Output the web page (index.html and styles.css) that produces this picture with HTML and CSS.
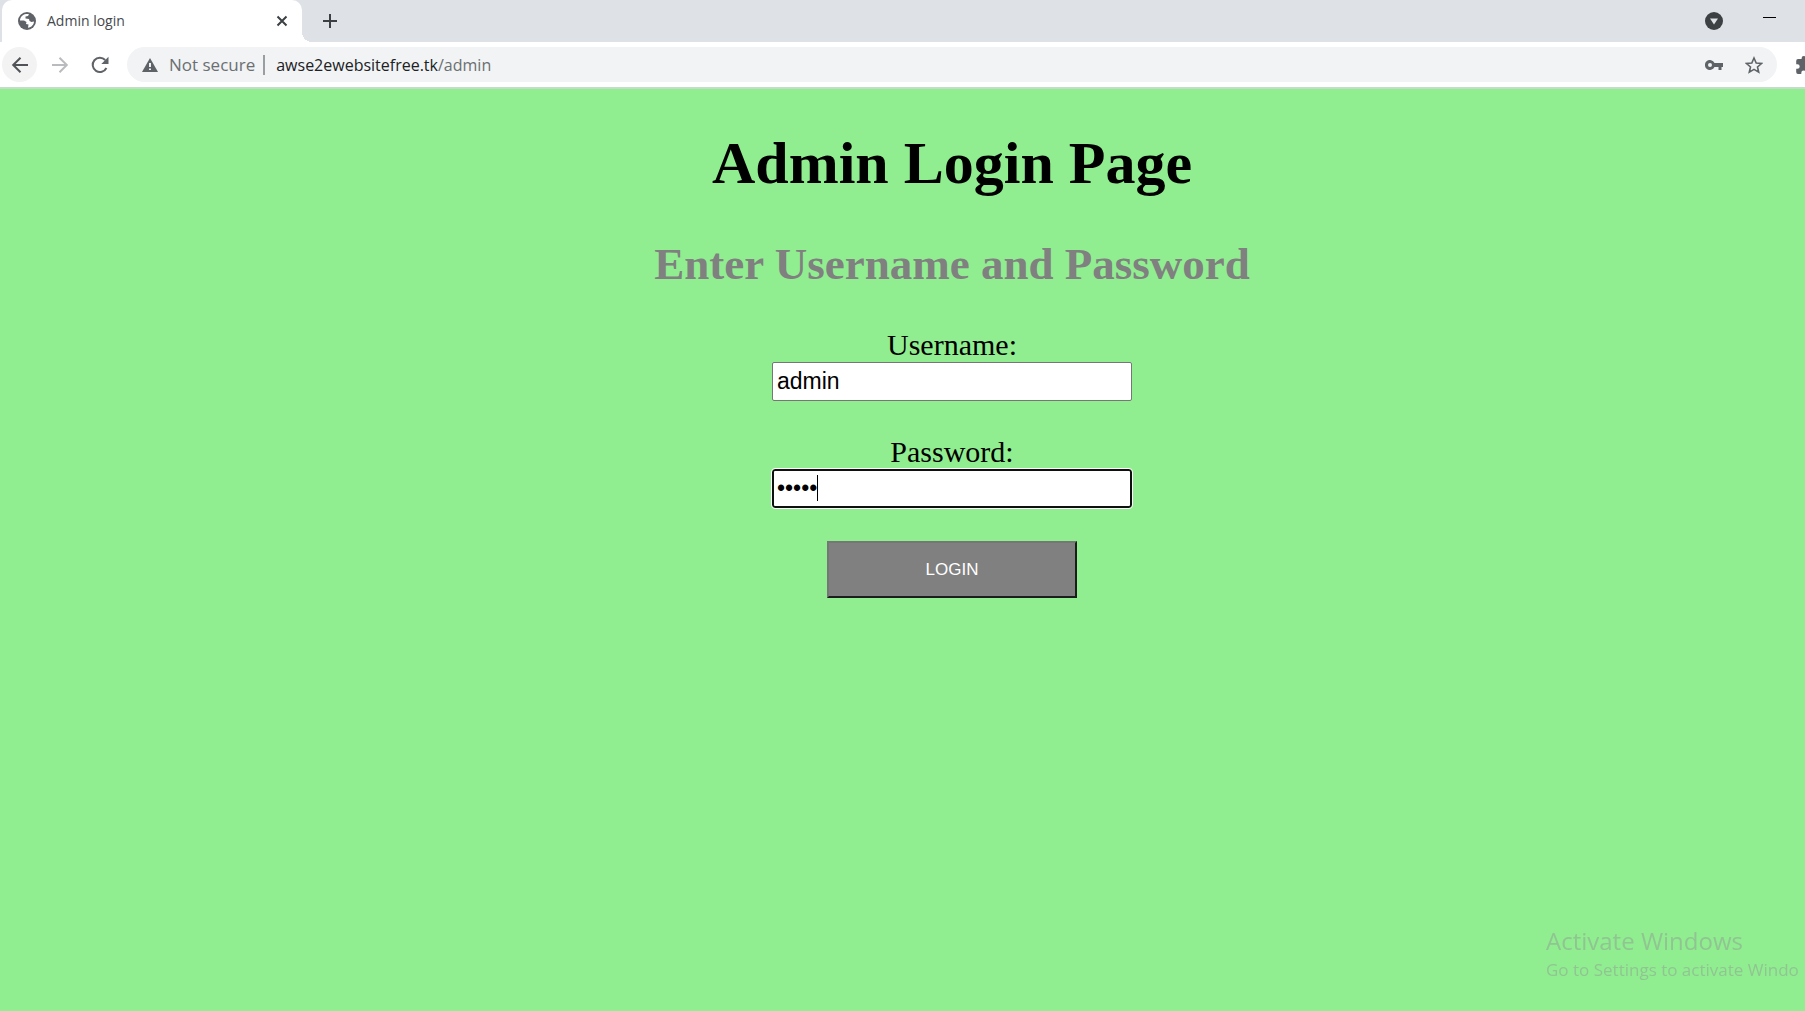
FILE: index.html
```html
<!DOCTYPE html>
<html lang="en">
<head>
<meta charset="utf-8">
<title>Admin login</title>
<link rel="stylesheet" href="styles.css">
</head>
<body>
<header class="browser">
  <div class="tabs">
    <div class="tab">
      <svg class="tab-icon" viewBox="0 0 18 18" aria-hidden="true"><circle cx="9" cy="9" r="9" fill="#5f6368"/><path d="M8 2C4.500 2.500 2 5.500 2 8.500L6 8.500 8.500 10 8 12 10.500 12.500 10 15.800C13.500 15.300 16 12.500 16 9.500L13.500 10 11.500 9 11 7 7.500 6.500 7.500 4.500 10 4 11 2.300C10 2 9 1.900 8 2Z" fill="#fff"/><path d="M3 9.500L5 10 6 12 8 13.500 8 16C5 15.500 3 13 3 9.500Z" fill="#5f6368"/></svg>
      <span class="tab-title">Admin login</span>
      <button class="icon-button close" aria-label="Close tab"><svg width="12" height="12" viewBox="0 0 12 12"><path d="M1.500 1.500l9 9M10.500 1.500l-9 9" stroke="#3c4043" stroke-width="2"/></svg></button>
    </div>
    <button class="icon-button new-tab" aria-label="New tab"><svg width="16" height="16" viewBox="0 0 16 16"><path d="M8 1v14M1 8h14" stroke="#3c4043" stroke-width="2"/></svg></button>
    <div class="window-controls">
      <button class="icon-button" aria-label="Search tabs"><svg width="18" height="18" viewBox="0 0 18 18"><circle cx="9" cy="9" r="9" fill="#3c4043"/><path d="M5 6.500h8L9 12.500z" fill="#dee1e6"/></svg></button>
      <button class="icon-button minimize" aria-label="Minimize"><svg width="13" height="8" viewBox="0 0 13 8"><path d="M0 .5h13" stroke="#000"/></svg></button>
    </div>
  </div>
  <div class="toolbar">
    <button class="icon-button nav back" aria-label="Back"><svg width="18" height="18" viewBox="0 0 18 18"><path d="M17 9H2.500M9.500 1.700L2.200 9l7.300 7.300" fill="none" stroke="#505357" stroke-width="2"/></svg></button>
    <button class="icon-button nav" aria-label="Forward"><svg width="18" height="18" viewBox="0 0 18 18"><path d="M1 9h14.500M8.500 1.700L15.800 9l-7.300 7.300" fill="none" stroke="#b9bbbe" stroke-width="2"/></svg></button>
    <button class="icon-button nav" aria-label="Reload"><svg width="18" height="18" viewBox="0 0 18 18"><path d="M15.400 12A7.200 7.200 0 1 1 14.200 4" fill="none" stroke="#5f6368" stroke-width="2"/><path d="M17.500 .8v7.200h-7.200z" fill="#5f6368"/></svg></button>
    <div class="omnibox">
      <svg width="16" height="14" viewBox="0 0 16 14" aria-hidden="true"><path d="M8 0l8 14H0z" fill="#5f6368"/><path d="M8 5v4M8 10.500v1.500" stroke="#f1f3f4" stroke-width="2"/></svg>
      <span class="security">Not secure</span>
      <span class="divider"></span>
      <span class="url">awse2ewebsitefree.tk<span class="path">/admin</span></span>
      <button class="icon-button" aria-label="Saved passwords"><svg width="18" height="10" viewBox="0 0 18 10"><path d="M9.500 3A5 5 0 1 0 9.500 7H13.500V10H16.500V7H18V3ZM5 7a2 2 0 1 1 0-4 2 2 0 0 1 0 4Z" fill="#5f6368" fill-rule="evenodd"/></svg></button>
      <button class="icon-button" aria-label="Bookmark this page"><svg width="18" height="18" viewBox="0 0 18 18"><path d="M9 2l2.200 5 5.300.5-4 3.500 1.200 5.200L9 13.400l-4.700 2.800L5.500 11l-4-3.500 5.300-.5z" fill="none" stroke="#5f6368" stroke-width="1.600"/></svg></button>
    </div>
    <button class="icon-button extensions" aria-label="Extensions"><svg width="18" height="18" viewBox="0 0 18 18"><path d="M16 8.500h-1V5a2 2 0 0 0-2-2h-3V2.300a2.200 2.200 0 0 0-4.400 0V3H2A2 2 0 0 0 .2 5v3.200h1.200a2.300 2.300 0 0 1 0 4.600H.2V16A2 2 0 0 0 2 18h3.300v-1.200a2.300 2.300 0 0 1 4.600 0V18H13a2 2 0 0 0 2-2v-3.200h1a2.200 2.200 0 0 0 0-4.300z" fill="#5f6368"/></svg></button>
  </div>
</header>
<main class="page">
  <h1 class="title">Admin Login Page</h1>
  <h2 class="subtitle">Enter Username and Password</h2>
  <form class="login">
    <div class="field">
      <label for="username">Username:</label>
      <input class="entry" id="username" type="text" value="admin">
    </div>
    <div class="field">
      <label for="password">Password:</label>
      <div class="entry-wrap">
        <input class="entry focused" id="password" type="password" value="admin">
        <span class="caret"></span>
      </div>
    </div>
    <button class="submit" type="button">LOGIN</button>
  </form>
</main>
<aside class="watermark">
  <p class="watermark-title">Activate Windows</p>
  <p class="watermark-text">Go to Settings to activate Windo</p>
</aside>
</body>
</html>
```
FILE: styles.css
```css
* { box-sizing: border-box; }
body {
  margin: 0;
  min-height: 100vh;
  overflow: hidden;
  background: #90ee90;
  color: #000;
  font-family: "Liberation Serif", serif;
}
.browser {
  background: #fff;
  border-bottom: 2px solid #c5dcc8;
  font-family: "Open Sans", sans-serif;
}
.icon-button {
  display: flex;
  align-items: center;
  justify-content: center;
  flex: none;
  padding: 0;
  border: 0;
  background: none;
}
.tabs {
  display: flex;
  align-items: center;
  height: 42px;
  padding-left: 2px;
  background: #dee1e6;
}
.tab {
  position: relative;
  display: flex;
  align-items: center;
  align-self: stretch;
  gap: 11px;
  width: 300px;
  padding: 0 14px 0 16px;
  border-radius: 10px 10px 0 0;
  background: #fff;
}
.tab::after {
  content: "";
  position: absolute;
  left: 100%;
  bottom: 0;
  width: 10px;
  height: 10px;
  background: radial-gradient(circle at 100% 0, #dee1e6 10px, #fff 10px);
}
.tab-icon { width: 18px; height: 18px; }
.tab-title { flex: 1; font-size: 14px; line-height: 18px; color: #45494d; }
.new-tab { margin-left: 20px; }
.window-controls {
  display: flex;
  align-items: center;
  gap: 40px;
  margin-left: auto;
  padding-right: 29px;
}
.toolbar {
  display: flex;
  align-items: center;
  height: 45px;
  padding-left: 2px;
}
.nav { width: 35px; height: 35px; margin-right: 5px; border-radius: 50%; }
.back { background: #f3f3f4; }
.omnibox {
  display: flex;
  align-items: center;
  flex: 1;
  height: 35px;
  margin: 0 19px 0 5px;
  padding: 0 14px 0 15px;
  border-radius: 18px;
  background: #f1f3f4;
  font-size: 17px;
  color: #202124;
}
.security { margin-left: 11px; color: #6b6f73; }
.divider { width: 2px; height: 20px; margin: 0 11px 0 8px; background: #9a9da1; }
.url { flex: 1; font-size: 16px; }
.path { color: #6b6f73; }
.omnibox .icon-button + .icon-button { margin-left: 22px; }
.extensions { margin-right: -9px; }
.page {
  display: flex;
  flex-direction: column;
  align-items: center;
  padding: 40px 0 0 99px;
}
.title { margin: 0; font-size: 60px; line-height: 69px; }
.subtitle { margin: 40px 0 37px; font-size: 45px; line-height: 52px; color: #808080; }
.login {
  display: flex;
  flex-direction: column;
  align-items: center;
  gap: 33px;
  font-size: 30px;
  line-height: 35px;
}
.field { display: flex; flex-direction: column; align-items: center; }
.entry-wrap { position: relative; display: flex; }
.entry {
  width: 360px;
  height: 39px;
  padding: 1px 4px;
  border: 1px solid #767676;
  border-radius: 2px;
  background: #fff;
  color: #000;
  font-family: "Liberation Sans", sans-serif;
  font-size: 23px;
}
.focused {
  padding: 0 3px;
  border: 2px solid #101010;
  border-radius: 3px;
  outline: 1px solid #fff;
}
.caret {
  position: absolute;
  left: 45px;
  top: 6px;
  width: 1px;
  height: 26px;
  background: #000;
}
.submit {
  width: 250px;
  height: 57px;
  padding: 0;
  border: 2px solid;
  border-color: #767676 #1c1c1c #1c1c1c #767676;
  background: #808080;
  color: #fff;
  font-family: "Liberation Sans", sans-serif;
  font-size: 17px;
}
.watermark {
  position: fixed;
  right: 0;
  bottom: 28px;
  width: 259px;
  white-space: nowrap;
  font-family: "Open Sans", sans-serif;
  color: #90c592;
}
.watermark p { margin: 0; }
.watermark-title { font-size: 24px; line-height: 32px; }
.watermark-text { font-size: 17px; line-height: 26px; }
```
